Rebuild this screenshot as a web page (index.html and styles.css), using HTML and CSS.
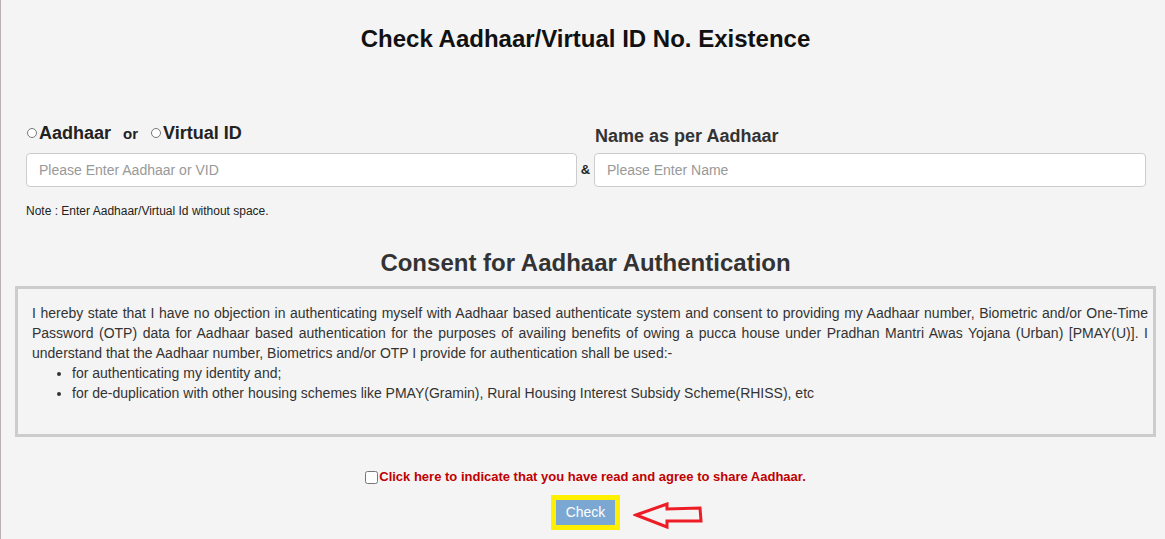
FILE: index.html
```html
<!DOCTYPE html>
<html lang="en">
<head>
<meta charset="utf-8">
<title>Check Aadhaar/Virtual ID No. Existence</title>
<link rel="stylesheet" href="styles.css">
</head>
<body>
<div class="page">
  <div class="container">
    <h1 class="title">Check Aadhaar/Virtual ID No. Existence</h1>

    <div class="form-row">
      <div class="field">
        <div class="label-left">
          <label class="radio-label"><input type="radio" name="idtype" class="radio">Aadhaar</label>
          <span class="or">or</span>
          <label class="radio-label"><input type="radio" name="idtype" class="radio">Virtual ID</label>
        </div>
        <input type="text" class="text-input" placeholder="Please Enter Aadhaar or VID">
        <p class="note">Note : Enter Aadhaar/Virtual Id without space.</p>
      </div>
      <span class="amp">&amp;</span>
      <div class="field">
        <div class="label-right">Name as per Aadhaar</div>
        <input type="text" class="text-input" placeholder="Please Enter Name">
      </div>
    </div>

    <h2 class="consent-title">Consent for Aadhaar Authentication</h2>

    <div class="consent-box">
      <p class="consent-text">I hereby state that I have no objection in authenticating myself with Aadhaar based authenticate system and consent to providing my Aadhaar number, Biometric and/or One-Time Password (OTP) data for Aadhaar based authentication for the purposes of availing benefits of owing a pucca house under Pradhan Mantri Awas Yojana (Urban) [PMAY(U)]. I understand that the Aadhaar number, Biometrics and/or OTP I provide for authentication shall be used:-</p>
      <ul class="consent-list">
        <li>for authenticating my identity and;</li>
        <li>for de-duplication with other housing schemes like PMAY(Gramin), Rural Housing Interest Subsidy Scheme(RHISS), etc</li>
      </ul>
    </div>

    <div class="agree">
      <label class="agree-label"><input type="checkbox" class="checkbox">Click here to indicate that you have read and agree to share Aadhaar.</label>
    </div>

    <div class="actions">
      <span class="btn-wrap">
        <button type="button" class="btn-check">Check</button>
        <svg class="arrow" width="72" height="28" viewBox="0 0 72 28" aria-hidden="true">
          <polygon points="3,13 34,2 34,7 67,6 68,19 34,19 34,25" fill="none" stroke="#ee1c25" stroke-width="3" stroke-linejoin="miter"/>
        </svg>
      </span>
    </div>
  </div>
</div>
</body>
</html>
```

FILE: styles.css
```css
html, body {
  margin: 0;
  padding: 0;
  background: #f4f4f4;
}

body {
  font-family: "Liberation Sans", Arial, sans-serif;
  color: #333;
}

.page {
  border-left: 1px solid #b8b1b1;
  min-height: 539px;
  box-sizing: border-box;
  padding-top: 25px;
}

.container {
  margin-left: 14px;
  width: 1141px;
}

.title {
  margin: 0;
  font-size: 24px;
  line-height: 28px;
  font-weight: bold;
  text-align: center;
  color: #111;
}

.form-row {
  display: grid;
  grid-template-columns: 551px 17px 552px;
  align-items: start;
  margin: 70px 0 0 11px;
}

.field {
  display: flex;
  flex-direction: column;
}

.label-left {
  display: flex;
  align-items: center;
  height: 20px;
  margin-bottom: 10px;
  font-size: 18px;
  font-weight: bold;
  color: #222;
}

.radio-label {
  display: inline-flex;
  align-items: center;
}

.radio {
  appearance: none;
  -webkit-appearance: none;
  width: 10px;
  height: 10px;
  margin: 0 2px 0 1px;
  border: 1px solid #777;
  border-radius: 50%;
  background: #fff;
  box-sizing: border-box;
}

.or {
  font-size: 15px;
  margin: 0 12px 0 12px;
}

.label-right {
  height: 20px;
  line-height: 20px;
  margin: 3px 0 7px 1px;
  font-size: 18px;
  font-weight: bold;
  color: #333;
}

.text-input {
  box-sizing: border-box;
  height: 34px;
  width: 100%;
  margin: 0;
  padding: 0 12px;
  border: 1px solid #ccc;
  border-radius: 4px;
  background: #fff;
  font-family: "Liberation Sans", Arial, sans-serif;
  font-size: 14px;
  color: #555;
}

.text-input::placeholder {
  color: #999;
}

.amp {
  margin-top: 30px;
  height: 34px;
  line-height: 34px;
  font-size: 13px;
  font-weight: bold;
  text-align: center;
  color: #222;
}

.note {
  margin: 17px 0 0 0;
  font-size: 12px;
  line-height: 14px;
  color: #222;
}

.consent-title {
  margin: 31px 0 0 0;
  font-size: 24px;
  line-height: 28px;
  font-weight: bold;
  text-align: center;
  color: #333;
}

.consent-box {
  margin-top: 9px;
  height: 151px;
  box-sizing: border-box;
  border: 3px solid #ccc;
  padding: 14px 5px 0 14px;
  font-size: 14px;
  line-height: 20px;
  color: #333;
}

.consent-text {
  margin: 0;
  text-align: justify;
}

.consent-list {
  margin: 0;
  padding-left: 40px;
}

.agree {
  margin-top: 32px;
  text-align: center;
  line-height: 16px;
}

.agree-label {
  display: inline-flex;
  align-items: center;
  font-size: 13px;
  font-weight: bold;
  color: #c00000;
}

.checkbox {
  width: 13px;
  height: 13px;
  margin: 0 1px 0 0;
}

.actions {
  margin-top: 8px;
  text-align: center;
}

.btn-wrap {
  position: relative;
  display: inline-block;
  border: 5px solid #ffef00;
  line-height: 0;
}

.btn-check {
  width: 59px;
  height: 25px;
  margin: 0;
  padding: 0;
  border: none;
  background: #7ba7d3;
  color: #fff;
  font-family: "Liberation Sans", Arial, sans-serif;
  font-size: 14px;
  line-height: 25px;
}

.arrow {
  position: absolute;
  left: 77px;
  top: 2px;
}
```
